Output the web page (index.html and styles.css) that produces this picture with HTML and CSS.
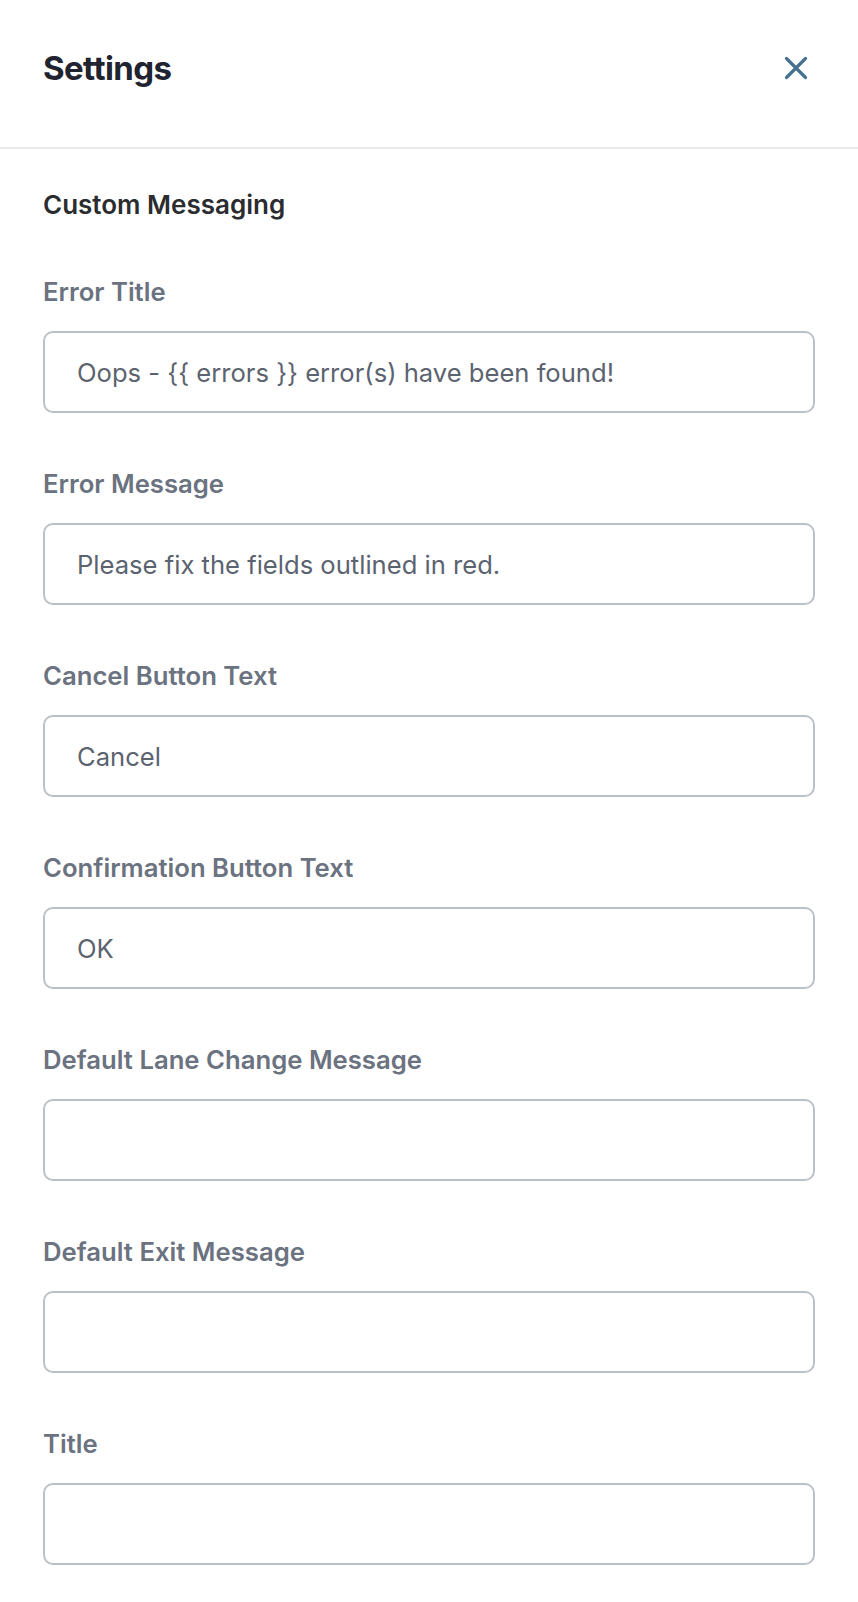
FILE: index.html
```html
<!DOCTYPE html>
<html>
<head>
<meta charset="utf-8">
<link rel="stylesheet" href="styles.css">
</head>
<body>
<div class="panel">
  <header class="header">
    <h1 class="title">Settings</h1>
    <button class="close" aria-label="Close">
      <svg width="24" height="24" viewBox="0 0 24 24"><path d="M2.5 2.5 L21.5 21.5 M21.5 2.5 L2.5 21.5" stroke="#467191" stroke-width="3.2" stroke-linecap="round" fill="none"/></svg>
    </button>
  </header>
  <main class="body">
    <h2 class="section">Custom Messaging</h2>
    <div class="field">
      <label class="label">Error Title</label>
      <div class="input">Oops - {{ errors }} error(s) have been found!</div>
    </div>
    <div class="field">
      <label class="label">Error Message</label>
      <div class="input">Please fix the fields outlined in red.</div>
    </div>
    <div class="field">
      <label class="label">Cancel Button Text</label>
      <div class="input">Cancel</div>
    </div>
    <div class="field">
      <label class="label">Confirmation Button Text</label>
      <div class="input">OK</div>
    </div>
    <div class="field">
      <label class="label">Default Lane Change Message</label>
      <div class="input"></div>
    </div>
    <div class="field">
      <label class="label">Default Exit Message</label>
      <div class="input"></div>
    </div>
    <div class="field">
      <label class="label">Title</label>
      <div class="input"></div>
    </div>
  </main>
</div>
</body>
</html>
```

FILE: styles.css
```css
html, body {
  margin: 0;
  padding: 0;
  background: #ffffff;
}
body {
  font-family: Inter, "Noto Sans", sans-serif;
}
.panel {
  width: 858px;
}
.header {
  height: 149px;
  box-sizing: border-box;
  border-bottom: 2px solid #e9eaec;
  display: flex;
  align-items: center;
  justify-content: space-between;
  padding: 0 42px 11px 43px;
}
.title {
  margin: 0;
  font-size: 33px;
  line-height: 40px;
  font-weight: 700;
  letter-spacing: -0.6px;
  color: #1f2430;
}
.close {
  border: 0;
  background: none;
  padding: 8px;
  margin: 0;
  display: flex;
  cursor: pointer;
}
.body {
  padding: 40px 43px 0 43px;
}
.section {
  margin: 0 0 55px 0;
  font-size: 26px;
  line-height: 32px;
  font-weight: 600;
  color: #2a2c30;
}
.field {
  display: flex;
  flex-direction: column;
  gap: 23px;
  margin-bottom: 55px;
}
.label {
  font-size: 25.7px;
  line-height: 32px;
  font-weight: 600;
  color: #6b7280;
}
.input {
  height: 82px;
  box-sizing: border-box;
  border: 2px solid #bcc0c7;
  border-radius: 10px;
  padding: 0 32px;
  display: flex;
  align-items: center;
  font-size: 25.6px;
  color: #5c6370;
  background: #fff;
}
```
